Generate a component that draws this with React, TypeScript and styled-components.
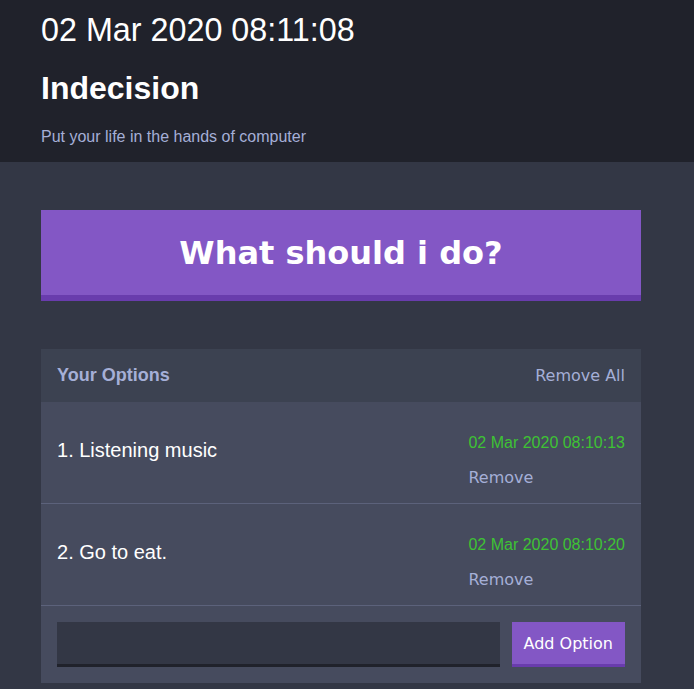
import React from "react";
import styled, { createGlobalStyle } from "styled-components";

const GlobalStyle = createGlobalStyle`
  html, body {
    margin: 0;
    padding: 0;
    background: #333745;
    font-family: "Liberation Sans", Arial, sans-serif;
  }
  * { box-sizing: border-box; }
`;

const Page = styled.div`
  min-height: 100vh;
  background: #333745;
`;

const Header = styled.header`
  background: #20222b;
  padding: 12px 0 16px;
`;

const Container = styled.div`
  width: 600px;
  margin-left: 41px;
`;

const Clock = styled.div`
  color: #fff;
  font-family: "Liberation Sans", Arial, sans-serif;
  font-size: 32.3px;
  line-height: normal;
`;

const Title = styled.h1`
  color: #fff;
  font-family: "Liberation Sans", Arial, sans-serif;
  font-size: 32px;
  font-weight: bold;
  line-height: normal;
  margin: 20.7px 0 0;
`;

const Subtitle = styled.h2`
  color: #a5afd7;
  font-family: "Liberation Sans", Arial, sans-serif;
  font-size: 16px;
  font-weight: normal;
  line-height: normal;
  margin: 21px 0 0;
`;

const Main = styled.main`
  padding-top: 48px;
`;

const BigButton = styled.button`
  display: block;
  width: 100%;
  background: #8357c5;
  border: none;
  border-bottom: 6px solid #693cad;
  color: #fff;
  font-family: "DejaVu Sans", sans-serif;
  font-size: 32px;
  font-weight: bold;
  line-height: normal;
  padding: 24px 0 23.75px;
  margin: 0 0 48px;
  cursor: pointer;
`;

const Widget = styled.section`
  background: #464b5e;
`;

const WidgetHeader = styled.div`
  display: flex;
  justify-content: space-between;
  align-items: center;
  background: #3c4251;
  padding: 16px;
`;

const WidgetTitle = styled.h3`
  margin: 0;
  color: #a5afd7;
  font-family: "Liberation Sans", Arial, sans-serif;
  font-size: 18px;
  font-weight: bold;
  line-height: normal;
`;

const LinkButton = styled.button`
  background: none;
  border: none;
  padding: 0;
  color: #a5afd7;
  font-family: "DejaVu Sans", sans-serif;
  font-size: 16px;
  line-height: normal;
  cursor: pointer;
`;

const OptionRow = styled.div`
  display: flex;
  justify-content: space-between;
  align-items: flex-start;
  padding: 32px 16px 16px;
  border-bottom: 1px solid #5c627b;
`;

const OptionText = styled.p`
  margin: 5px 0 0;
  color: #fff;
  font-family: "Liberation Sans", Arial, sans-serif;
  font-size: 20px;
  line-height: normal;
`;

const OptionMeta = styled.div`
  display: flex;
  flex-direction: column;
  align-items: flex-start;
  gap: 16px;
`;

const OptionDate = styled.span`
  color: #3ec234;
  font-family: "Liberation Sans", Arial, sans-serif;
  font-size: 16px;
  line-height: normal;
`;

const Form = styled.form`
  display: flex;
  gap: 12px;
  padding: 16px;
`;

const Input = styled.input`
  flex: 1;
  background: #333745;
  border: none;
  border-bottom: 3px solid #20222b;
  color: #a5afd7;
  font-family: "Liberation Sans", Arial, sans-serif;
  font-size: 16px;
  padding: 12px;
  outline: none;
`;

const AddButton = styled.button`
  background: #8357c5;
  border: none;
  border-bottom: 3px solid #693cad;
  color: #fff;
  font-family: "DejaVu Sans", sans-serif;
  font-size: 16px;
  line-height: normal;
  padding: 12px 12px 11px;
  cursor: pointer;
`;

const options = [
  { text: "Listening music", date: "02 Mar 2020 08:10:13" },
  { text: "Go to eat.", date: "02 Mar 2020 08:10:20" },
];

export default function App() {
  return (
    <Page>
      <GlobalStyle />
      <Header>
        <Container>
          <Clock>02 Mar 2020 08:11:08</Clock>
          <Title>Indecision</Title>
          <Subtitle>Put your life in the hands of computer</Subtitle>
        </Container>
      </Header>
      <Main>
        <Container>
          <BigButton>What should i do?</BigButton>
          <Widget>
            <WidgetHeader>
              <WidgetTitle>Your Options</WidgetTitle>
              <LinkButton>Remove All</LinkButton>
            </WidgetHeader>
            {options.map((o, i) => (
              <OptionRow key={i}>
                <OptionText>
                  {i + 1}. {o.text}
                </OptionText>
                <OptionMeta>
                  <OptionDate>{o.date}</OptionDate>
                  <LinkButton>Remove</LinkButton>
                </OptionMeta>
              </OptionRow>
            ))}
            <Form onSubmit={(e) => e.preventDefault()}>
              <Input type="text" name="option" />
              <AddButton type="submit">Add Option</AddButton>
            </Form>
          </Widget>
        </Container>
      </Main>
    </Page>
  );
}
